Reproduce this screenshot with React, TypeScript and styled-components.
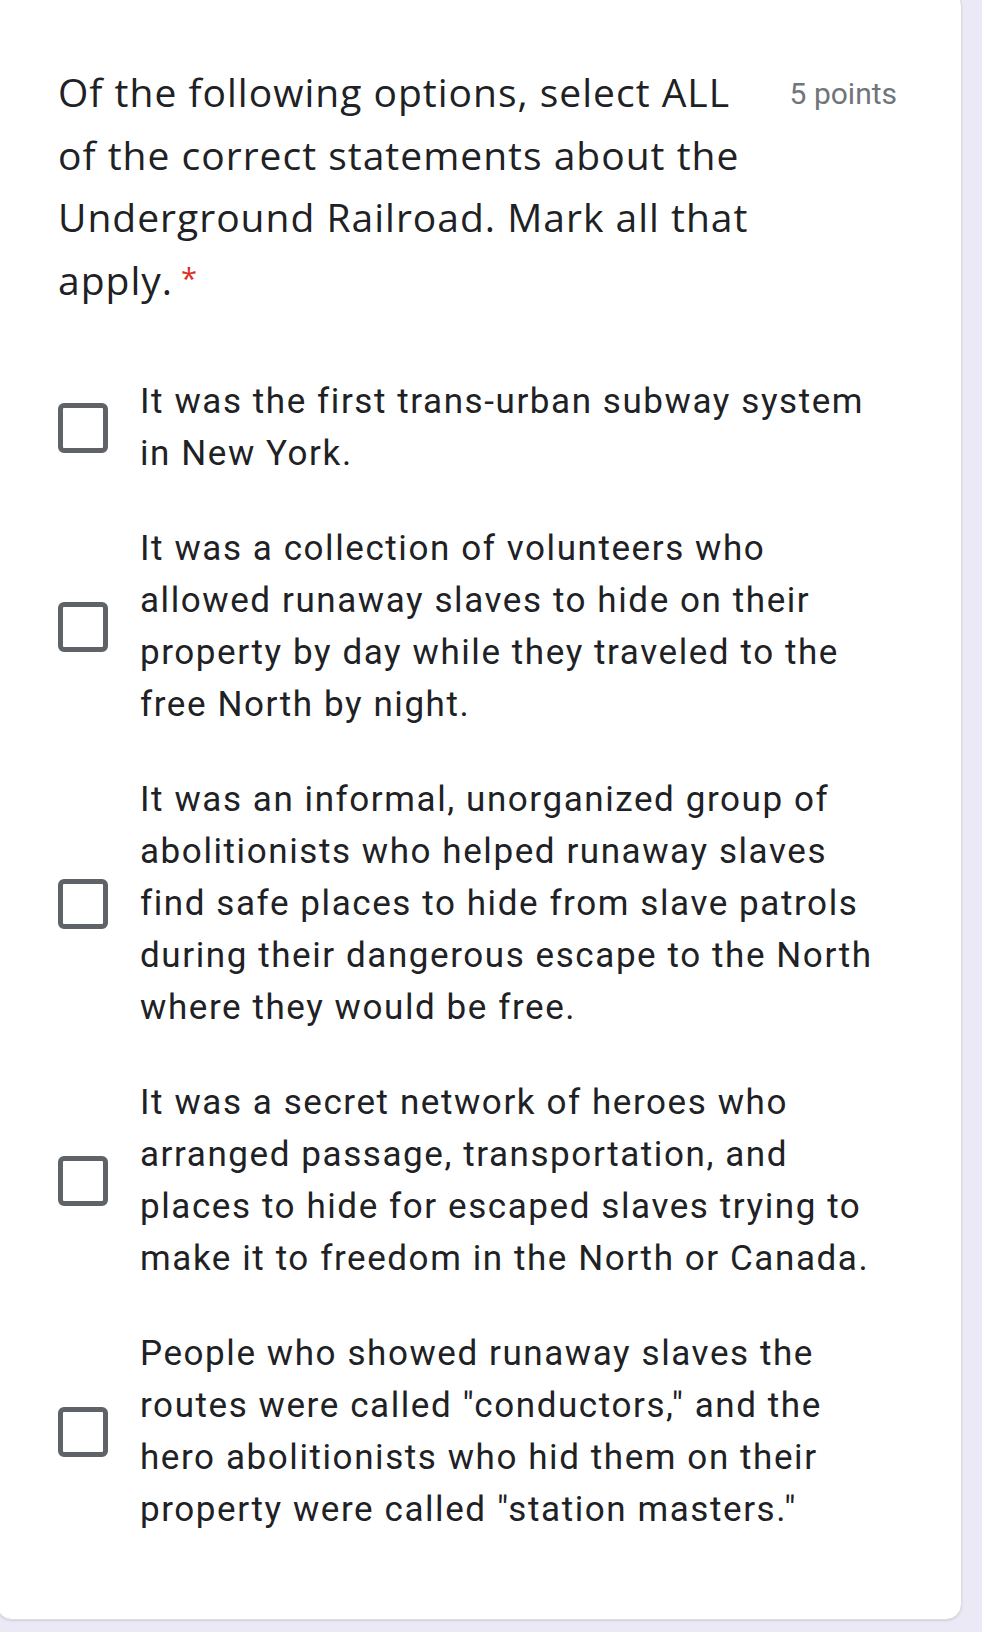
import React from "react";
import styled, { createGlobalStyle } from "styled-components";

const Global = createGlobalStyle`
  html, body { margin: 0; padding: 0; background: #ece9f6; }
  body { overflow: hidden; }
`;

const Page = styled.div`
  width: 982px;
  height: 1632px;
  background: #ece9f6;
  overflow: hidden;
`;

const Card = styled.div`
  width: 966px;
  margin: -10px 0 0 -4px;
  box-sizing: border-box;
  background: #ffffff;
  border-radius: 16px;
  border: 1px solid #dadce0;
  box-shadow: 0 1px 2px rgba(60, 64, 67, 0.15);
  padding: 70px 64px 83px 61px;
`;

const Header = styled.div`
  display: flex;
  align-items: flex-start;
  justify-content: space-between;
`;

const Title = styled.div`
  font-family: "Open Sans", Lato, sans-serif;
  font-size: 39px;
  line-height: 62.5px;
  height: 250px;
  color: #202124;
  letter-spacing: 1px;
`;

const Required = styled.span`
  color: #d93025;
  margin-left: 8px;
  font-size: 29px;
  line-height: 1;
  vertical-align: 6px;
`;

const Points = styled.div`
  font-family: Roboto, sans-serif;
  font-size: 30px;
  line-height: 62.5px;
  padding-top: 2px;
  color: #70757a;
  white-space: nowrap;
`;

const Options = styled.div`
  margin-top: 65px;
  display: flex;
  flex-direction: column;
  gap: 43px;
`;

const Option = styled.label`
  display: flex;
  align-items: center;
  gap: 32px;
`;

const Box = styled.span`
  flex: 0 0 auto;
  width: 50px;
  height: 50px;
  box-sizing: border-box;
  border: 5px solid #5f6368;
  border-radius: 6px;
`;

const OptionText = styled.div`
  font-family: Roboto, sans-serif;
  font-size: 35px;
  line-height: 52px;
  color: #202124;
  letter-spacing: 1.58px;
`;

const options: string[][] = [
  ["It was the first trans-urban subway system", "in New York."],
  [
    "It was a collection of volunteers who",
    "allowed runaway slaves to hide on their",
    "property by day while they traveled to the",
    "free North by night.",
  ],
  [
    "It was an informal, unorganized group of",
    "abolitionists who helped runaway slaves",
    "find safe places to hide from slave patrols",
    "during their dangerous escape to the North",
    "where they would be free.",
  ],
  [
    "It was a secret network of heroes who",
    "arranged passage, transportation, and",
    "places to hide for escaped slaves trying to",
    "make it to freedom in the North or Canada.",
  ],
  [
    "People who showed runaway slaves the",
    "routes were called \"conductors,\" and the",
    "hero abolitionists who hid them on their",
    "property were called \"station masters.\"",
  ],
];

const titleLines = [
  "Of the following options, select ALL",
  "of the correct statements about the",
  "Underground Railroad. Mark all that",
];

export default function App() {
  return (
    <Page>
      <Global />
      <Card>
        <Header>
          <Title>
            {titleLines.map((l, i) => (
              <React.Fragment key={i}>
                {l}
                <br />
              </React.Fragment>
            ))}
            apply.<Required>*</Required>
          </Title>
          <Points>5 points</Points>
        </Header>
        <Options>
          {options.map((lines, i) => (
            <Option key={i}>
              <Box />
              <OptionText>
                {lines.map((l, j) => (
                  <React.Fragment key={j}>
                    {l}
                    {j < lines.length - 1 && <br />}
                  </React.Fragment>
                ))}
              </OptionText>
            </Option>
          ))}
        </Options>
      </Card>
    </Page>
  );
}
